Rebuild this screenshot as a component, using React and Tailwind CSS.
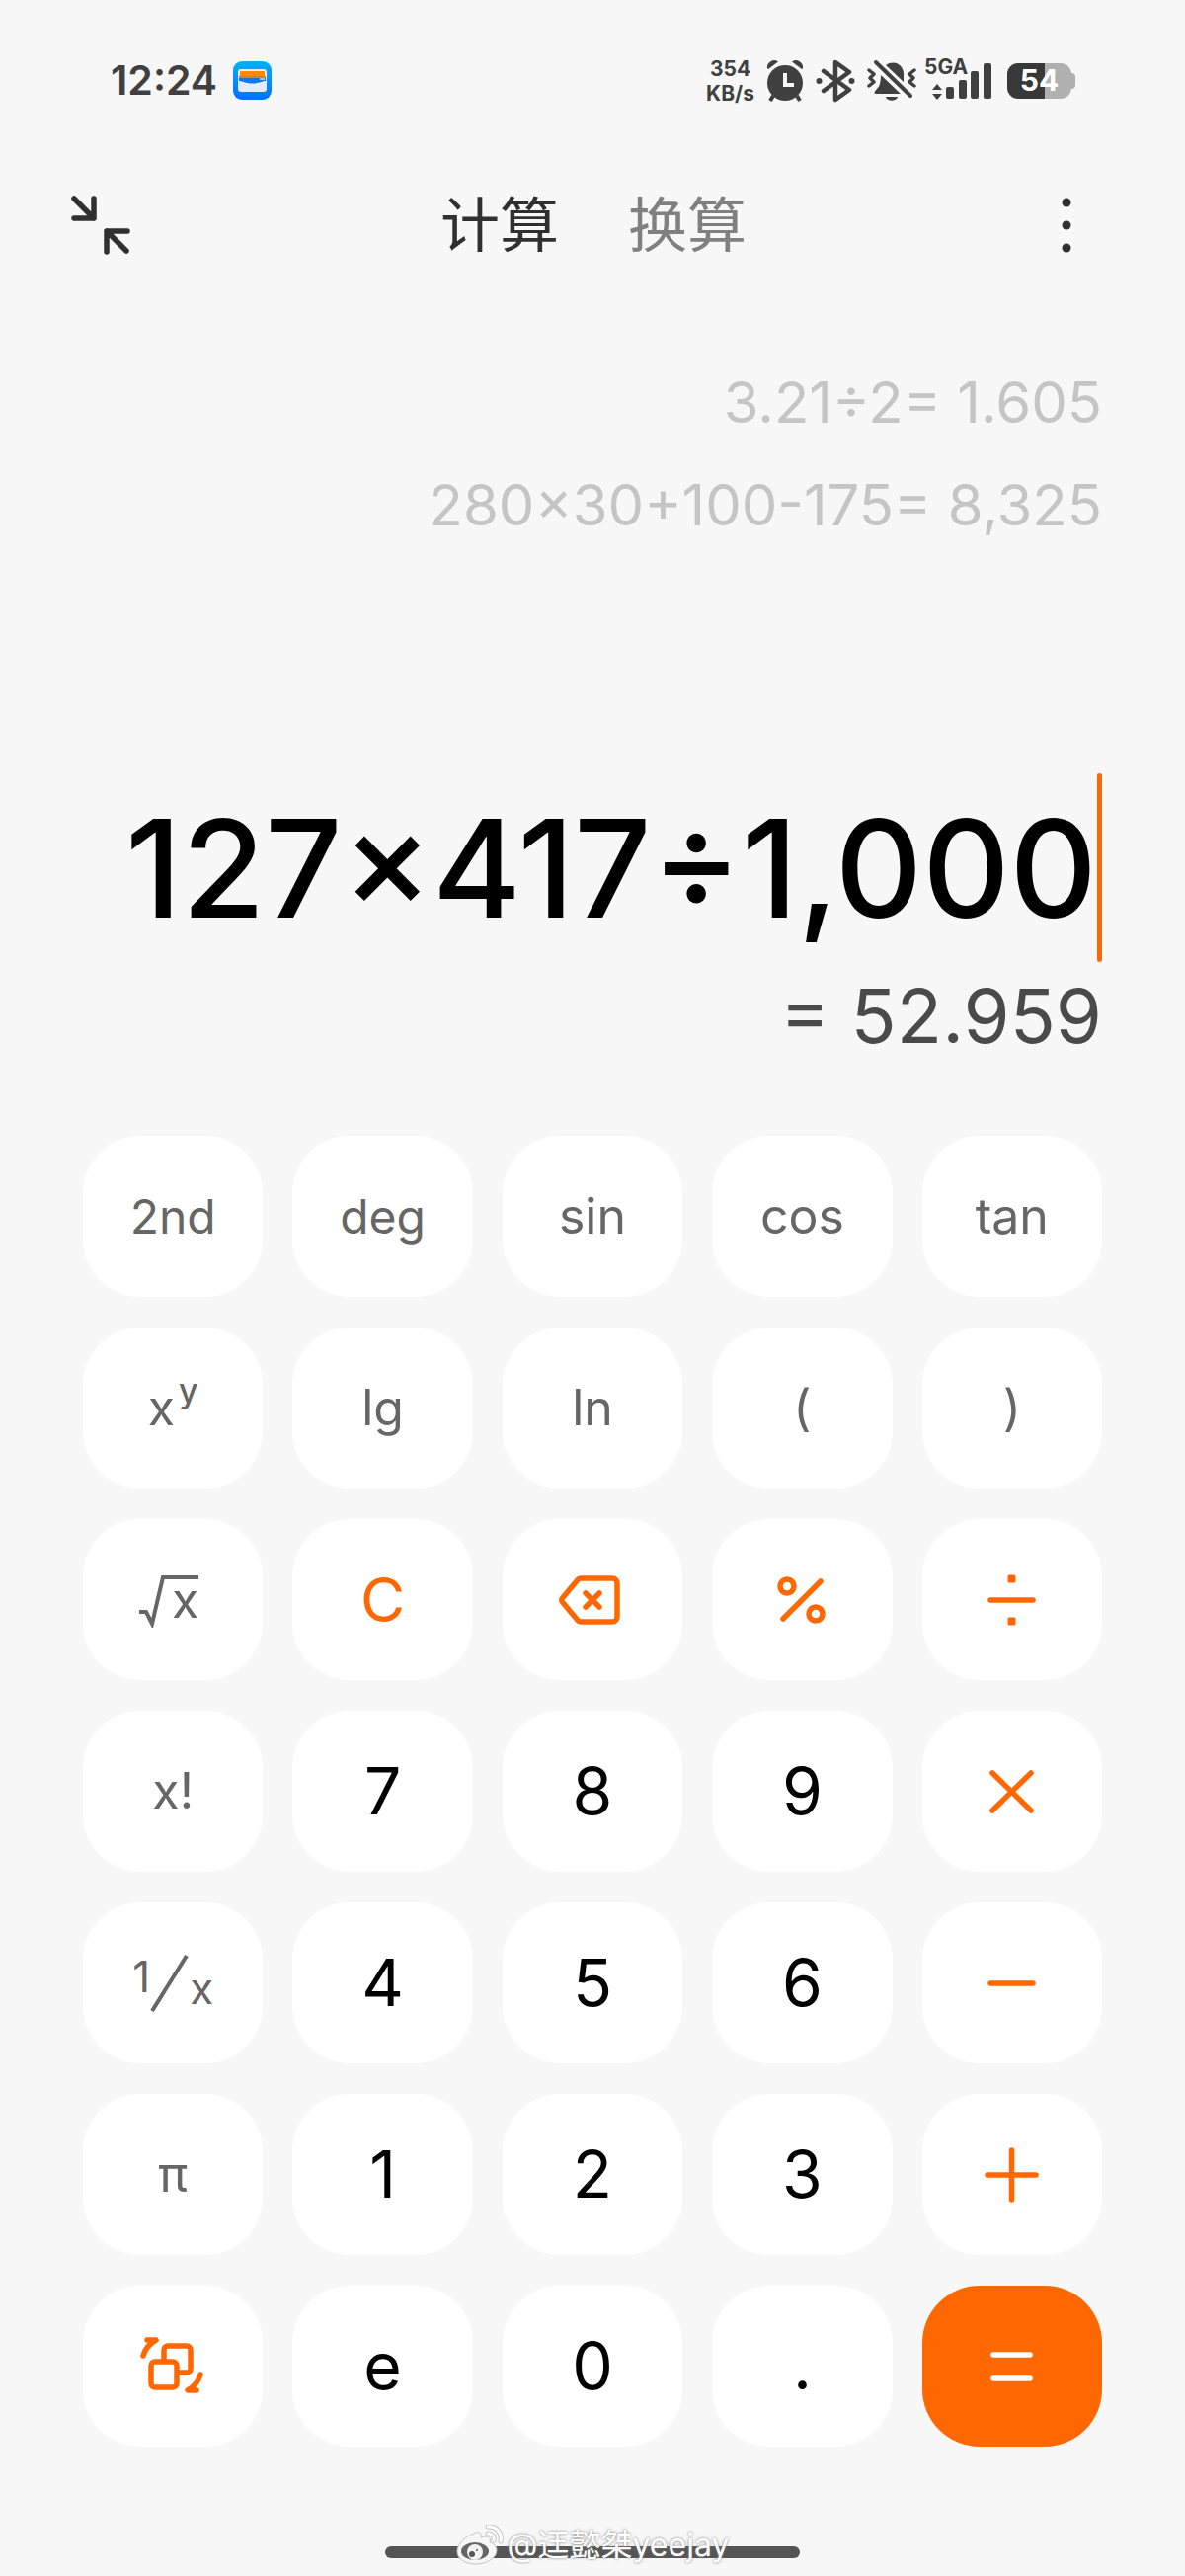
import React from 'react';

const ORANGE = '#ff6700';

const AppBadge = () => (
    <svg width="39" height="39" viewBox="0 0 39 39" aria-hidden="true">
        <defs>
            <linearGradient id="badge" x1="0" y1="0" x2="0" y2="1">
                <stop offset="0" stopColor="#0aaef5" />
                <stop offset="1" stopColor="#0070ff" />
            </linearGradient>
        </defs>
        <rect width="39" height="39" rx="9" fill="url(#badge)" />
        <rect x="5" y="8" width="29" height="23" rx="3" fill="#e3ecfa" />
        <rect x="7" y="10" width="25" height="6" rx="1" fill="#ff8a00" />
        <rect x="6" y="15" width="27" height="2" fill="#a08c78" />
        <path d="M6 17h27v3c-4 0-6 2.500-13.500 2.500S10 20 6 20z" fill="#0a78f5" />
        <path d="M27 17h5v2h-5z" fill="#9cc8ff" />
    </svg>
);

const AlarmIcon = () => (
    <svg width="38" height="44" viewBox="0 0 38 44" fill="#404040" aria-hidden="true">
        <circle cx="19" cy="24" r="18" />
        <path d="M1 9a7 7 0 0 1 11-6.500L2 10z" />
        <path d="M37 9a7 7 0 0 0-11-6.500L36 10z" />
        <path d="M7 37l-3 5M31 37l3 5" stroke="#404040" strokeWidth="4" />
        <path d="M19 14v12h9" fill="none" stroke="#f7f7f7" strokeWidth="4" />
    </svg>
);

const BluetoothIcon = () => (
    <svg width="40" height="44" viewBox="0 0 40 44" fill="none" stroke="#404040" strokeWidth="4.500" strokeLinejoin="round" strokeLinecap="round" aria-hidden="true">
        <path d="M8 12l26 19-14 10V3l14 10L8 32" />
        <path d="M3.500 22h0M36.500 22h0" strokeWidth="6" />
    </svg>
);

const MutedBellIcon = () => (
    <svg width="50" height="44" viewBox="0 0 50 44" fill="#404040" aria-hidden="true">
        <path d="M14 16l20 19H9c-1.500 0-2-1-1-2.500l4-5c1-2 2-6 2-11.500z" />
        <path d="M19 6c9-6 18 0 18 9v8z" />
        <path d="M19 38h12c-1 5-11 5-12 0z" />
        <path d="M9 3l35 34" stroke="#404040" strokeWidth="4" strokeLinecap="round" />
        <path d="M2 11l5 4-4 4 4 4-5 4M48 11l-5 4 4 4-4 4 5 4" fill="none" stroke="#404040" strokeWidth="3.500" strokeLinejoin="round" strokeLinecap="round" />
    </svg>
);

const SignalIcon = () => (
    <svg width="60" height="38" viewBox="0 0 60 38" fill="#404040" aria-hidden="true">
        <path d="M0 28l5-6 5 6zM0 32l5 6 5-6z" />
        <rect x="14" y="25" width="8" height="12" rx="2" />
        <rect x="27" y="18" width="8" height="19" rx="2" />
        <rect x="39" y="9" width="8" height="28" rx="2" />
        <rect x="52" y="1" width="8" height="36" rx="2" />
    </svg>
);

const CollapseIcon = () => (
    <svg width="60" height="60" viewBox="0 0 60 60" fill="none" stroke="#303030" strokeWidth="5.500" strokeLinecap="round" strokeLinejoin="round" aria-hidden="true">
        <path d="M3 3l20 20M23 3v20H3" />
        <path d="M56 56L36 36M57 36H36v21" />
    </svg>
);

const MoreIcon = () => (
    <svg width="20" height="60" viewBox="0 0 20 60" fill="#303030" aria-hidden="true">
        <circle cx="10" cy="7" r="4.500" />
        <circle cx="10" cy="30" r="4.500" />
        <circle cx="10" cy="53" r="4.500" />
    </svg>
);

const KeyIcon = ({ color = ORANGE, children }) => (
    <svg width="72" height="72" viewBox="0 0 72 72" fill="none" stroke={color} strokeWidth="5.500" strokeLinecap="round" strokeLinejoin="round" aria-hidden="true">
        {children}
    </svg>
);

const RootLabel = () => (
    <span className="flex pr-2 text-[50px] leading-[60px]">
        <span className="relative flex w-[60px] justify-end">
            <svg className="absolute left-0 top-1" width="60" height="54" viewBox="0 0 60 54" fill="none" stroke="#666666" strokeWidth="4" aria-hidden="true">
                <path d="M0 38h7l6 12L24 3h36" />
            </svg>
            x
        </span>
    </span>
);

const ReciprocalLabel = () => (
    <span className="flex items-center text-[44px] leading-[60px]">
        <span className="self-start leading-[44px]">1</span>
        <svg width="40" height="58" viewBox="0 0 40 58" stroke="#666666" strokeWidth="4" aria-hidden="true">
            <path d="M2 57L37 1" />
        </svg>
        <span className="self-end leading-[48px]">x</span>
    </span>
);

const fn = 'text-[50px] text-[#666666]';
const num = 'text-[66px] text-black';
const op = 'text-[#ff6700]';

const keys = [
    { name: '2nd', style: 'text-[48px] text-[#666666]' },
    { name: 'deg', style: 'text-[48px] text-[#666666]' },
    { name: 'sin', style: fn },
    { name: 'cos', style: fn },
    { name: 'tan', style: fn },
    {
        name: 'x to the y',
        style: fn,
        label: (
            <span className="flex items-start">
                <span>x</span>
                <span className="ml-1 text-[34px] font-medium leading-[40px]">y</span>
            </span>
        ),
    },
    { name: 'lg', style: fn },
    { name: 'ln', style: fn },
    { name: '(', style: fn },
    { name: ')', style: fn },
    { name: 'square root', style: fn, label: <RootLabel /> },
    { name: 'C', style: `text-[62px] ${op}` },
    {
        name: 'delete',
        style: op,
        label: (
            <KeyIcon>
                <path d="M24 14h32a5 5 0 0 1 5 5v34a5 5 0 0 1-5 5H24a4 4 0 0 1-3-1.500L5.500 38a3 3 0 0 1 0-4L21 15.500a4 4 0 0 1 3-1.500z" />
                <path d="M29 29l14 14M43 29L29 43" />
            </KeyIcon>
        ),
    },
    {
        name: 'percent',
        style: op,
        label: (
            <KeyIcon>
                <circle cx="21" cy="22" r="7" />
                <circle cx="50" cy="50" r="7" />
                <path d="M55 17L17 55" />
            </KeyIcon>
        ),
    },
    {
        name: 'divide',
        style: op,
        label: (
            <KeyIcon>
                <path d="M14 36h43" />
                <path d="M33 12h5v5h-5zM33 55h5v5h-5z" fill={ORANGE} strokeWidth="3" />
            </KeyIcon>
        ),
    },
    { name: 'x!', style: fn },
    { name: '7', style: num },
    { name: '8', style: num },
    { name: '9', style: num },
    { name: 'multiply', style: op, label: <KeyIcon><path d="M16 17l39 38M55 17L16 55" /></KeyIcon> },
    { name: 'one over x', style: fn, label: <ReciprocalLabel /> },
    { name: '4', style: num },
    { name: '5', style: num },
    { name: '6', style: num },
    { name: 'minus', style: op, label: <KeyIcon><path d="M14 36h43" /></KeyIcon> },
    { name: 'π', style: fn },
    { name: '1', style: num },
    { name: '2', style: num },
    { name: '3', style: num },
    { name: 'plus', style: op, label: <KeyIcon><path d="M11 36h49M35.500 11v50" /></KeyIcon> },
    {
        name: 'switch keypad',
        style: op,
        label: (
            <KeyIcon>
                <rect x="14" y="31" width="26" height="26" rx="4" />
                <path d="M27 30V19a4 4 0 0 1 4-4h19a4 4 0 0 1 4 4v19a4 4 0 0 1-4 4H41" />
                <path d="M6 25c2-7 6-12 13-16H10M64 44c-2 7-6 12-13 16h9" />
            </KeyIcon>
        ),
    },
    { name: 'e', style: num },
    { name: '0', style: num },
    { name: '.', style: num },
    { name: 'equals', style: 'text-white', equals: true, label: <KeyIcon color="#ffffff"><path d="M17 24h37M17 48h37" /></KeyIcon> },
];

const Key = ({ name, label, style, equals }) => (
    <button
        type="button"
        aria-label={label ? name : undefined}
        className={`flex h-[163px] items-center justify-center rounded-[58px] ${equals ? 'bg-[#ff6700]' : 'bg-white'} ${style}`}
    >
        {label || name}
    </button>
);

const StatusBar = () => (
    <div className="flex h-[163px] items-center justify-between pl-28 pr-[111px] text-[#404040]">
        <div className="flex items-center gap-4">
            <span className="text-[41px] font-semibold">12:24</span>
            <AppBadge />
        </div>
        <div className="flex items-center gap-3">
            <div className="text-center text-[21px] font-bold leading-[25px]">
                354
                <br />
                KB/s
            </div>
            <AlarmIcon />
            <BluetoothIcon />
            <MutedBellIcon />
            <div className="relative mr-1 flex w-[64px] justify-end">
                <span className="absolute -top-2 -left-1 text-[21px] font-bold leading-[25px]">5GA</span>
                <SignalIcon />
            </div>
            <div className="flex items-center">
                <div className="flex h-9 w-[65px] items-center justify-center rounded-[11px] bg-linear-to-r from-[#383838] from-58% to-[#b0b0b0] to-58% text-[30px] font-bold text-white">
                    54
                </div>
                <div className="h-4 w-1 rounded-r-full bg-[#b0b0b0]" />
            </div>
        </div>
    </div>
);

const Header = () => (
    <header className="flex h-[129px] items-center justify-between pl-[72px] pr-[110px]">
        <button type="button" aria-label="collapse">
            <CollapseIcon />
        </button>
        <nav className="flex gap-[70px] text-[60px] leading-[72px]">
            <button type="button" className="text-[#303030]">计算</button>
            <button type="button" className="text-[#808080]">换算</button>
        </nav>
        <button type="button" aria-label="more">
            <MoreIcon />
        </button>
    </header>
);

const Display = () => (
    <section className="flex flex-col items-end px-[84px] pt-[63px] text-right">
        <div className="text-[58px] leading-[104px] text-[#c5c5c5]">
            <div>3.21÷2= 1.605</div>
            <div>280×30+100-175= 8,325</div>
        </div>
        <div className="mt-[220px] flex items-center">
            <span className="text-[137px] font-medium leading-[190px] text-black">127×417÷1,000</span>
            <span className="h-[191px] w-[5px] rounded-full bg-[#ff6700]" />
        </div>
        <div className="mt-1 text-[76px] leading-[100px] text-[#4a4a4a]">= 52.959</div>
    </section>
);

const WeiboMark = () => (
    <svg width="48" height="42" viewBox="0 0 48 42" aria-hidden="true">
        <path d="M18 9c5-3 8-1 7 4 6-2 11-1 9 5 4 1 7 4 7 8 0 8-10 14-21 14S1 35 1 27C1 20 9 12 18 9z" fill="#f7f7f7" stroke="#c4c4c4" strokeWidth="1" />
        <ellipse cx="19" cy="27" rx="14" ry="9" fill="#666666" />
        <circle cx="19" cy="28" r="8" fill="#f2f2f2" />
        <circle cx="16" cy="30" r="3" fill="#555555" />
        <circle cx="21" cy="26" r="1" fill="#555555" />
        <path d="M32 2c8-1 15 6 13 15M32 9c4 0 7 3 6 7" fill="none" stroke="#c4c4c4" strokeWidth="5" strokeLinecap="round" />
        <path d="M32 2c8-1 15 6 13 15M32 9c4 0 7 3 6 7" fill="none" stroke="#ffffff" strokeWidth="3" strokeLinecap="round" />
    </svg>
);

const Footer = () => (
    <footer className="relative mt-[83px] flex h-12 items-center justify-center">
        <div className="h-3 w-[420px] rounded-full bg-[#555555]" />
        <div className="absolute inset-x-0 -top-1 flex items-center justify-center gap-1 text-[32px] leading-[36px] text-white [text-shadow:0_0_3px_#777777]">
            <WeiboMark />
            <span lang="zh-CN">@迋懿桀yeejay</span>
        </div>
    </footer>
);

const App = () => (
    <main className="min-h-screen bg-[#f7f7f7] font-['Inter','Noto_Sans_CJK_SC',sans-serif]">
        <StatusBar />
        <Header />
        <Display />
        <section className="mt-[72px] grid grid-cols-5 gap-x-[30px] gap-y-[31px] px-[84px]">
            {keys.map((key) => (
                <Key key={key.name} {...key} />
            ))}
        </section>
        <Footer />
    </main>
);

export default App;
